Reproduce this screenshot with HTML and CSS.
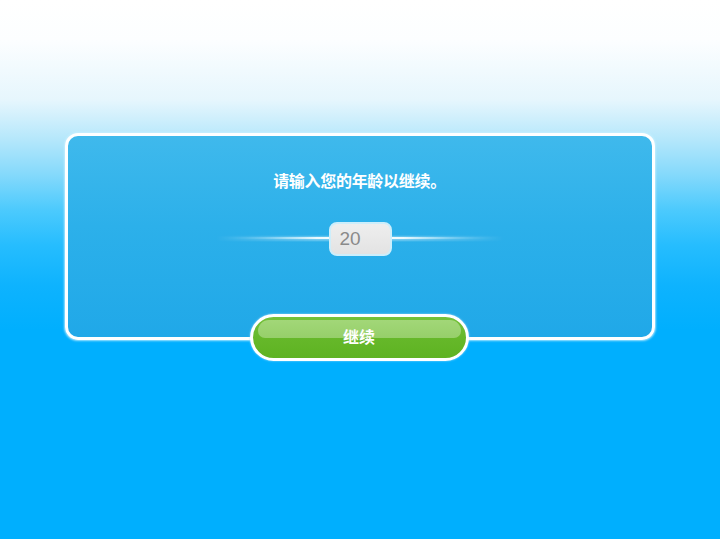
FILE: index.html
```html
<!DOCTYPE html>
<html lang="zh">
<head>
<meta charset="utf-8">
<title>年龄验证</title>
<link rel="stylesheet" href="styles.css">
</head>
<body>
<main class="stage">
  <section class="panel">
    <h1 class="title">请输入您的年龄以继续。</h1>
    <div class="age-row">
      <span class="glow"></span>
      <div class="age-box">20</div>
    </div>
  </section>
  <button class="continue"><span class="shine"></span><span class="label">继续</span></button>
</main>
</body>
</html>
```

FILE: styles.css
```css
html, body {
  margin: 0;
  padding: 0;
}
body {
  width: 720px;
  height: 539px;
  overflow: hidden;
  background: #00affe;
  font-family: "Liberation Sans", "Noto Sans CJK SC", sans-serif;
}
.stage {
  box-sizing: border-box;
  height: 539px;
  padding-top: 133px;
  display: flex;
  flex-direction: column;
  align-items: center;
  background: linear-gradient(to bottom,
    #ffffff 0px,
    #fcfeff 40px,
    #e6f6fd 100px,
    #b4e7fb 140px,
    #84d9fb 175px,
    #4ccafd 210px,
    #26bdfe 245px,
    #0eb3fe 285px,
    #00affe 330px,
    #00affe 539px);
}
.panel {
  box-sizing: border-box;
  width: 590px;
  height: 207px;
  margin-left: -1px;
  border: 3px solid #ffffff;
  border-radius: 13px;
  background: linear-gradient(to bottom, #3fb9ec 0%, #2cb0ea 45%, #20a8e8 100%);
  box-shadow: 0 0 2px 1px rgba(200, 240, 255, 0.8);
  display: flex;
  flex-direction: column;
  align-items: center;
}
.title {
  margin: 33px 0 0 0;
  font-family: "Noto Sans CJK SC", sans-serif;
  font-size: 16px;
  line-height: 22px;
  font-weight: 700;
  color: #ffffff;
  letter-spacing: -0.3px;
}
.age-row {
  margin-top: 31px;
  width: 300px;
  height: 34px;
  display: flex;
  justify-content: center;
  align-items: center;
  position: relative;
}
.glow {
  position: absolute;
  left: 5px;
  right: 5px;
  top: 13px;
  height: 7px;
  background: linear-gradient(to bottom,
    rgba(255,255,255,0) 0%,
    rgba(255,255,255,0.35) 30%,
    rgba(255,255,255,0.35) 70%,
    rgba(255,255,255,0) 100%);
  -webkit-mask-image: linear-gradient(to right, transparent 0%, #000 35%, #000 65%, transparent 100%);
  mask-image: linear-gradient(to right, transparent 0%, #000 35%, #000 65%, transparent 100%);
}
.glow::after {
  content: "";
  position: absolute;
  left: 0;
  right: 0;
  top: 2px;
  height: 2px;
  background: linear-gradient(to right,
    rgba(255,255,255,0) 0%,
    rgba(240,252,255,0.8) 25%,
    #ffffff 45%,
    #ffffff 55%,
    rgba(240,252,255,0.8) 75%,
    rgba(255,255,255,0) 100%);
}
.age-box {
  position: relative;
  box-sizing: border-box;
  width: 63px;
  height: 34px;
  margin-left: 1px;
  padding-left: 9px;
  border: 2px solid #cdeefb;
  border-radius: 8px;
  background: linear-gradient(to bottom, #eeeeee, #e3e3e3);
  color: #8a8a8a;
  font-family: "Liberation Sans", sans-serif;
  font-size: 19px;
  line-height: 30px;
}
.continue {
  position: relative;
  box-sizing: border-box;
  width: 219px;
  height: 47px;
  margin-top: -26px;
  margin-left: -2px;
  border: 3px solid #ffffff;
  border-radius: 24px;
  background: linear-gradient(to bottom, #74c13a 0%, #66b82a 50%, #5eb322 100%);
  box-shadow: 0 0 2px rgba(180, 230, 255, 0.9);
  color: #ffffff;
  font-family: "Noto Sans CJK SC", sans-serif;
  font-size: 16px;
  font-weight: 700;
  line-height: 20px;
  padding: 0;
  overflow: hidden;
}
.shine {
  position: absolute;
  left: 5px;
  right: 5px;
  top: 3px;
  height: 18px;
  border-radius: 14px 14px 9px 9px;
  background: linear-gradient(to bottom, #a2d778 0%, #96cf6a 100%);
}
.label {
  position: relative;
  display: block;
  margin-top: -3px;
}
```
